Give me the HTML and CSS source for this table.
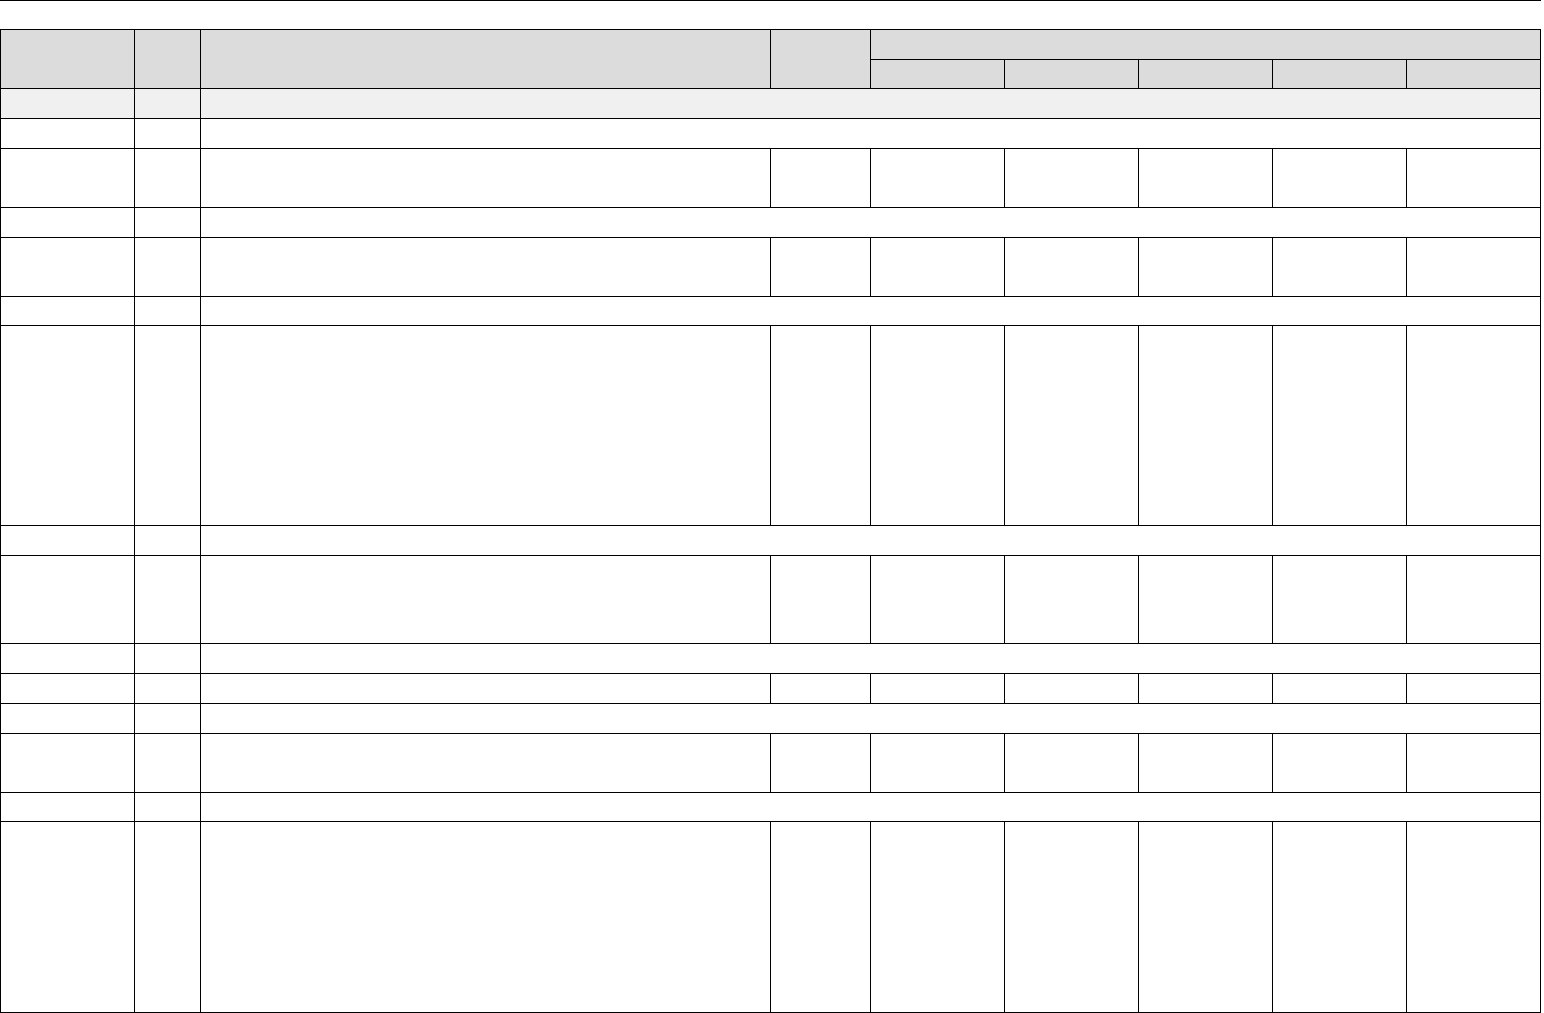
FILE: index.html
```html
<!DOCTYPE html>
<html lang="en">
<head>
<meta charset="utf-8">
<title>Sheet</title>
<link rel="stylesheet" href="styles.css">
</head>
<body>
<div class="rule"></div>
<div class="sheet">
  <div class="c hd tall"></div>
  <div class="c hd tall"></div>
  <div class="c hd tall"></div>
  <div class="c hd tall"></div>
  <div class="c hd group"></div>
  <div class="c hd"></div><div class="c hd"></div><div class="c hd"></div><div class="c hd"></div><div class="c hd"></div>

  <div class="c sec"></div><div class="c sec"></div><div class="c sec span"></div>

  <div class="c"></div><div class="c"></div><div class="c span"></div>
  <div class="c"></div><div class="c"></div><div class="c"></div><div class="c"></div><div class="c"></div><div class="c"></div><div class="c"></div><div class="c"></div><div class="c"></div>

  <div class="c"></div><div class="c"></div><div class="c span"></div>
  <div class="c"></div><div class="c"></div><div class="c"></div><div class="c"></div><div class="c"></div><div class="c"></div><div class="c"></div><div class="c"></div><div class="c"></div>

  <div class="c"></div><div class="c"></div><div class="c span"></div>
  <div class="c"></div><div class="c"></div><div class="c"></div><div class="c"></div><div class="c"></div><div class="c"></div><div class="c"></div><div class="c"></div><div class="c"></div>

  <div class="c"></div><div class="c"></div><div class="c span"></div>
  <div class="c"></div><div class="c"></div><div class="c"></div><div class="c"></div><div class="c"></div><div class="c"></div><div class="c"></div><div class="c"></div><div class="c"></div>

  <div class="c"></div><div class="c"></div><div class="c span"></div>
  <div class="c"></div><div class="c"></div><div class="c"></div><div class="c"></div><div class="c"></div><div class="c"></div><div class="c"></div><div class="c"></div><div class="c"></div>

  <div class="c"></div><div class="c"></div><div class="c span"></div>
  <div class="c"></div><div class="c"></div><div class="c"></div><div class="c"></div><div class="c"></div><div class="c"></div><div class="c"></div><div class="c"></div><div class="c"></div>

  <div class="c"></div><div class="c"></div><div class="c span"></div>
  <div class="c"></div><div class="c"></div><div class="c"></div><div class="c"></div><div class="c"></div><div class="c"></div><div class="c"></div><div class="c"></div><div class="c"></div>
</div>
</body>
</html>
```
FILE: styles.css
```css
html, body {
  margin: 0;
  padding: 0;
  background: #fff;
  font-family: "Liberation Sans", Arial, sans-serif;
  font-size: 13px;
}

.rule {
  width: 1541px;
  height: 1px;
  background: #000;
}

.sheet {
  margin-top: 28px;
  width: 1541px;
  box-sizing: border-box;
  display: grid;
  grid-template-columns: 133px 65px 569px 99px 133px 133px 133px 133px 133px;
  grid-template-rows: 29px 28px 29px 29px 58px 29px 58px 28px 199px 29px 87px 29px 29px 29px 58px 28px 190px;
  gap: 1px;
  padding: 1px;
  background: #000;
}

.c {
  background: #fff;
}

.hd {
  background: #dcdcdc;
}

.tall {
  grid-row: span 2;
}

.group {
  grid-column: span 5;
}

.sec {
  background: #f0f0f0;
}

.span {
  grid-column: 3 / 10;
}
```
